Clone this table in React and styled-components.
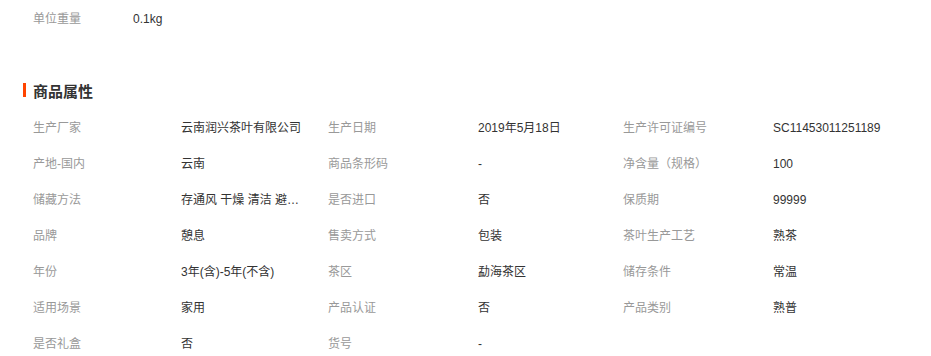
import styled, { createGlobalStyle } from "styled-components";

const GlobalStyle = createGlobalStyle`
  body {
    margin: 0;
    background: #fff;
    font-family: "Liberation Sans", Arial, "Noto Sans CJK SC", sans-serif;
    font-size: 12px;
    color: #333;
  }
`;

const Page = styled.div`
  width: 931px;
  padding-top: 10px;
`;

const WeightRow = styled.div`
  display: flex;
  padding-left: 33px;
  line-height: 18px;
`;

const WeightLabel = styled.span`
  width: 100px;
  color: #999;
`;

const WeightValue = styled.span`
  color: #333;
`;

const SectionTitle = styled.h3`
  display: flex;
  align-items: center;
  margin: 52px 0 10px 23px;
  height: 20px;
  font-size: 15px;
  font-weight: bold;
  color: #333;
  &::before {
    content: "";
    width: 3px;
    height: 14px;
    margin-right: 7px;
    background: #ff4400;
  }
`;

const Grid = styled.div`
  display: grid;
  grid-template-columns: 148px 147px 150px 145px 150px 145px;
  padding-left: 33px;
`;

const Label = styled.div`
  line-height: 36px;
  height: 36px;
  color: #999;
  white-space: nowrap;
`;

const Value = styled.div`
  line-height: 36px;
  height: 36px;
  color: #333;
  white-space: nowrap;
  overflow: hidden;
  text-overflow: ellipsis;
  max-width: ${(p) => (p.$narrow ? "121px" : "none")};
`;

const attrs = [
  ["生产厂家", "云南润兴茶叶有限公司"],
  ["生产日期", "2019年5月18日"],
  ["生产许可证编号", "SC11453011251189"],
  ["产地-国内", "云南"],
  ["商品条形码", "-"],
  ["净含量（规格）", "100"],
  ["储藏方法", "存通风 干燥 清洁 避光 无异味处", true],
  ["是否进口", "否"],
  ["保质期", "99999"],
  ["品牌", "憩息"],
  ["售卖方式", "包装"],
  ["茶叶生产工艺", "熟茶"],
  ["年份", "3年(含)-5年(不含)"],
  ["茶区", "勐海茶区"],
  ["储存条件", "常温"],
  ["适用场景", "家用"],
  ["产品认证", "否"],
  ["产品类别", "熟普"],
  ["是否礼盒", "否"],
  ["货号", "-"],
];

export default function App() {
  return (
    <Page>
      <GlobalStyle />
      <WeightRow>
        <WeightLabel>单位重量</WeightLabel>
        <WeightValue>0.1kg</WeightValue>
      </WeightRow>
      <SectionTitle>商品属性</SectionTitle>
      <Grid>
        {attrs.map(([label, value, narrow]) => [
          <Label key={label + "l"}>{label}</Label>,
          <Value key={label + "v"} $narrow={narrow}>
            {value}
          </Value>,
        ])}
      </Grid>
    </Page>
  );
}
